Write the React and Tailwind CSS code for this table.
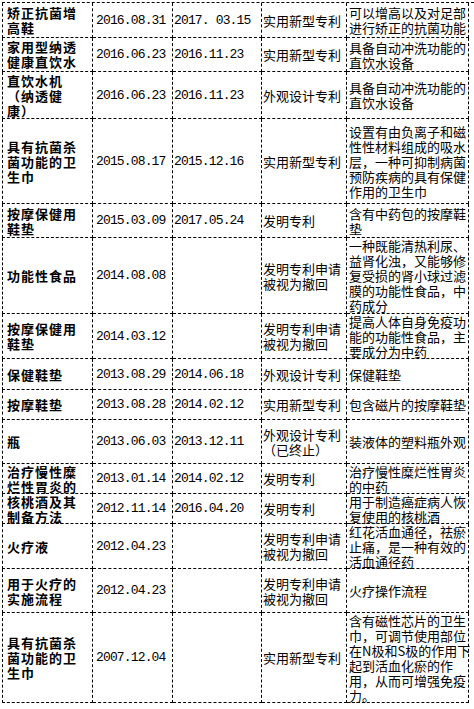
const COLS = [
    'w-[91px] border-l pl-[4px] font-bold tracking-[1px]',
    "w-[80px] pl-[3px] font-['Liberation_Mono',monospace] tracking-[-0.85px]",
    "w-[89px] pl-[1px] font-['Liberation_Mono',monospace] tracking-[-0.85px]",
    'w-[85px] pl-[1px]',
    'w-[122px] pl-[2px]',
];

const ROWS = [
    { h: 'h-[36px] border-t', name: ['矫正抗菌增', '高鞋'], applied: '2016.08.31', granted: '2017. 03.15', kind: ['实用新型专利'], desc: ['可以增高以及对足部', '进行矫正的抗菌功能'] },
    { h: 'h-[34px]', name: ['家用型纳透', '健康直饮水', '机'], clip: true, applied: '2016.06.23', granted: '2016.11.23', kind: ['实用新型专利'], desc: ['具备自动冲洗功能的', '直饮水设备'] },
    { h: 'h-[47px]', name: ['直饮水机', '（纳透健', '康）'], applied: '2016.06.23', granted: '2016.11.23', kind: ['外观设计专利'], desc: ['具备自动冲洗功能的', '直饮水设备'] },
    { h: 'h-[85px]', name: ['具有抗菌杀', '菌功能的卫', '生巾'], applied: '2015.08.17', granted: '2015.12.16', kind: ['实用新型专利'], desc: ['设置有由负离子和磁', '性性材料组成的吸水', '层，一种可抑制病菌', '预防疾病的具有保健', '作用的卫生巾'] },
    { h: 'h-[34px]', name: ['按摩保健用', '鞋垫'], applied: '2015.03.09', granted: '2017.05.24', kind: ['发明专利'], desc: ['含有中药包的按摩鞋', '垫'] },
    { h: 'h-[76px]', name: ['功能性食品'], applied: '2014.08.08', granted: '', kind: ['发明专利申请', '被视为撤回'], desc: ['一种既能清热利尿、', '益肾化浊，又能够修', '复受损的肾小球过滤', '膜的功能性食品，中', '药成分'] },
    { h: 'h-[45px]', name: ['按摩保健用', '鞋垫'], applied: '2014.03.12', granted: '', kind: ['发明专利申请', '被视为撤回'], desc: ['提高人体自身免疫功', '能的功能性食品，主', '要成分为中药'] },
    { h: 'h-[31px]', name: ['保健鞋垫'], applied: '2013.08.29', granted: '2014.06.18', kind: ['外观设计专利'], desc: ['保健鞋垫'] },
    { h: 'h-[30px]', name: ['按摩鞋垫'], applied: '2013.08.28', granted: '2014.02.12', kind: ['实用新型专利'], desc: ['包含磁片的按摩鞋垫'] },
    { h: 'h-[44px]', name: ['瓶'], applied: '2013.06.03', granted: '2013.12.11', kind: ['外观设计专利', '（已终止）'], desc: ['装液体的塑料瓶外观'] },
    { h: 'h-[30px]', name: ['治疗慢性糜', '烂性胃炎的'], applied: '2013.01.14', granted: '2014.02.12', kind: ['发明专利'], desc: ['治疗慢性糜烂性胃炎', '的中药'] },
    { h: 'h-[30px]', name: ['核桃酒及其', '制备方法'], applied: '2012.11.14', granted: '2016.04.20', kind: ['发明专利'], desc: ['用于制造癌症病人恢', '复使用的核桃酒'] },
    { h: 'h-[45px]', name: ['火疗液'], applied: '2012.04.23', granted: '', kind: ['发明专利申请', '被视为撤回'], desc: ['红花活血通径，祛瘀', '止痛，是一种有效的', '活血通径药'] },
    { h: 'h-[44px]', name: ['用于火疗的', '实施流程'], applied: '2012.04.23', granted: '', kind: ['发明专利申请', '被视为撤回'], desc: ['火疗操作流程'] },
    { h: 'h-[90px]', name: ['具有抗菌杀', '菌功能的卫', '生巾'], applied: '2007.12.04', granted: '', kind: ['实用新型专利'], desc: ['含有磁性芯片的卫生', '巾，可调节使用部位', '在N极和S极的作用下', '起到活血化瘀的作', '用，从而可增强免疫', '力。'] },
];

function Lines({ lines }) {
    return (
        <div className="whitespace-nowrap">
            {lines.map((line, i) => (
                <div key={i}>{line}</div>
            ))}
        </div>
    );
}

function Cell({ col, clip, children }) {
    return (
        <div
            className={`${COLS[col]} flex h-full shrink-0 border-r border-b border-dashed border-black ${
                clip ? 'items-start overflow-hidden pt-[1px]' : 'items-center'
            }`}
        >
            {children}
        </div>
    );
}

export default function App() {
    return (
        <div className="bg-white pt-[2px] pl-[2px] text-[13px] leading-[15px] text-black font-['Noto_Sans_CJK_SC',sans-serif]">
            {ROWS.map((row, i) => (
                <div key={i} className={`flex border-dashed border-black ${row.h}`}>
                    <Cell col={0} clip={row.clip}>
                        <Lines lines={row.name} />
                    </Cell>
                    <Cell col={1}>{row.applied}</Cell>
                    <Cell col={2}>
                        <span className="whitespace-pre">{row.granted}</span>
                    </Cell>
                    <Cell col={3}>
                        <Lines lines={row.kind} />
                    </Cell>
                    <Cell col={4}>
                        <Lines lines={row.desc} />
                    </Cell>
                </div>
            ))}
        </div>
    );
}
